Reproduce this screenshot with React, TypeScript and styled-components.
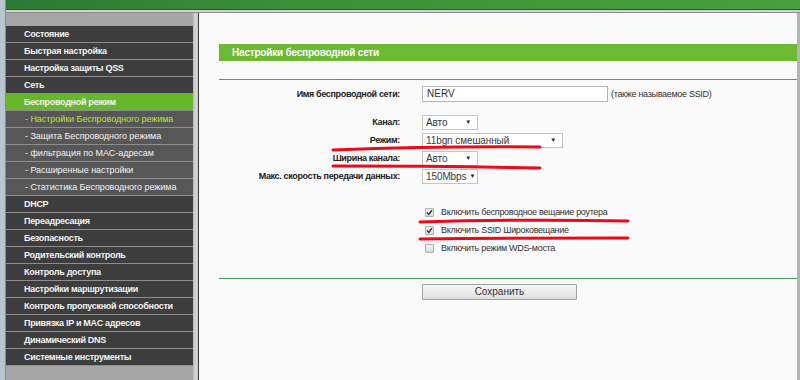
import React from "react";
import styled, { createGlobalStyle } from "styled-components";

const Global = createGlobalStyle`
  html, body { margin: 0; padding: 0; background: #fafafa; }
  body { font-family: "Liberation Sans", Arial, sans-serif; }
  * { box-sizing: border-box; }
`;

const Page = styled.div`
  position: relative;
  width: 800px;
  height: 380px;
  overflow: hidden;
  display: flex;
  background: #fafafa;
`;

const EdgeStrip = styled.div`
  width: 6px;
  flex: none;
  background: #b9c6cf;
  border-right: 1px solid #7f8a92;
`;

const Main = styled.div`
  flex: 1;
  display: flex;
  flex-direction: column;
`;

const TopBar = styled.div`
  height: 10px;
  flex: none;
  background: linear-gradient(90deg, #2a7a34 0%, #3c9238 40%, #46a03c 100%);
  border-bottom: 1px solid #1e5e28;
`;

const TopBand = styled.div`
  height: 3px;
  flex: none;
  background: #d2d2d2;
  border-bottom: 1px solid #8c8c8c;
`;

const Body = styled.div`
  flex: 1;
  display: flex;
  min-height: 0;
`;

const Sidebar = styled.nav`
  width: 187px;
  flex: none;
  background: #a6a6a6;
  padding-top: 13px;
  display: flex;
  flex-direction: column;
`;

const Rail = styled.div`
  width: 6px;
  flex: none;
  background: linear-gradient(90deg, #bdbdbd 0%, #d6d6d6 60%, #c4c4c4 100%);
  border-right: 1px solid #3a3a3a;
`;

type Kind = "main" | "sub" | "active" | "subactive";
const isSub = (k: Kind) => k === "sub" || k === "subactive";

const MenuItem = styled.div<{ $kind: Kind }>`
  height: 17px;
  line-height: 17px;
  border-bottom: 1px solid #8e8e8e;
  padding-left: ${(p) => (isSub(p.$kind) ? 19 : 18)}px;
  font-size: 9px;
  letter-spacing: ${(p) => (isSub(p.$kind) ? "-0.05px" : "-0.3px")};
  font-weight: ${(p) => (isSub(p.$kind) ? 400 : 700)};
  white-space: nowrap;
  background: ${(p) =>
    p.$kind === "active" ? "#66b82a" : p.$kind === "main" ? "#3d3d3d" : "#575757"};
  color: ${(p) => (p.$kind === "subactive" ? "#b8e62a" : "#f2f2f2")};
`;

const Content = styled.main`
  flex: 1;
  display: flex;
  flex-direction: column;
  padding: 31px 0 0 20px;
  border-right: 3px solid #b4b4b4;
`;

const Header = styled.div`
  height: 17px;
  background: #6cba32;
  color: #ffffff;
  font-size: 10px;
  font-weight: 700;
  letter-spacing: -0.2px;
  line-height: 17px;
  padding-left: 13px;
`;

const Divider = styled.div<{ $top: number; $bottom: number }>`
  height: 1px;
  background: #4e9a66;
  margin-top: ${(p) => p.$top}px;
  margin-bottom: ${(p) => p.$bottom}px;
`;

const Row = styled.div<{ $h?: number; $mt?: number }>`
  display: flex;
  align-items: center;
  height: ${(p) => p.$h ?? 18}px;
  margin-top: ${(p) => p.$mt ?? 0}px;
`;

const Label = styled.div`
  width: 181px;
  text-align: right;
  font-size: 9px;
  font-weight: 700;
  letter-spacing: -0.35px;
  color: #222;
  margin-right: 22px;
  white-space: nowrap;
`;

const TextInput = styled.div`
  width: 186px;
  height: 16px;
  border: 1px solid #b5b5b5;
  background: #fff;
  font-size: 10px;
  color: #333;
  line-height: 14px;
  padding-left: 4px;
`;

const Hint = styled.span`
  font-size: 9px;
  letter-spacing: -0.3px;
  color: #333;
  margin-left: 3px;
`;

const Select = styled.div<{ $w: number }>`
  width: ${(p) => p.$w}px;
  height: 15px;
  border: 1px solid #c4c4c4;
  background: #fff;
  display: flex;
  align-items: center;
  justify-content: space-between;
  gap: 3px;
  font-size: 10px;
  letter-spacing: -0.1px;
  color: #3a3a3a;
  padding: 0 6px 0 3px;
  white-space: nowrap;
`;

const Arrow = styled.span`
  font-size: 6px;
  color: #222;
`;

const CheckRow = styled.div`
  display: flex;
  align-items: center;
  height: 18px;
  padding-left: 206px;
  font-size: 9px;
  letter-spacing: -0.3px;
  color: #333;
`;

const Box = styled.span`
  width: 9px;
  height: 9px;
  border: 1px solid #b0b0b0;
  background: linear-gradient(#f2f2f2, #dadada);
  border-radius: 1px;
  margin-right: 7px;
  display: flex;
  align-items: center;
  justify-content: center;
`;

const Button = styled.div`
  margin-left: 203px;
  width: 155px;
  height: 16px;
  border: 1px solid #a0a0a0;
  border-radius: 1px;
  background: linear-gradient(#f6f6f6, #e0e0e0);
  font-size: 10px;
  color: #333;
  text-align: center;
  line-height: 14px;
`;

const Marks = styled.svg`
  position: absolute;
  left: 0;
  top: 0;
  pointer-events: none;
`;

const menu: { t: string; k: Kind }[] = [
  { t: "Состояние", k: "main" },
  { t: "Быстрая настройка", k: "main" },
  { t: "Настройка защиты QSS", k: "main" },
  { t: "Сеть", k: "main" },
  { t: "Беспроводной режим", k: "active" },
  { t: "- Настройки Беспроводного режима", k: "subactive" },
  { t: "- Защита Беспроводного режима", k: "sub" },
  { t: "- фильтрация по MAC-адресам", k: "sub" },
  { t: "- Расширенные настройки", k: "sub" },
  { t: "- Статистика Беспроводного режима", k: "sub" },
  { t: "DHCP", k: "main" },
  { t: "Переадресация", k: "main" },
  { t: "Безопасность", k: "main" },
  { t: "Родительский контроль", k: "main" },
  { t: "Контроль доступа", k: "main" },
  { t: "Настройки маршрутизации", k: "main" },
  { t: "Контроль пропускной способности", k: "main" },
  { t: "Привязка IP и MAC адресов", k: "main" },
  { t: "Динамический DNS", k: "main" },
  { t: "Системные инструменты", k: "main" },
];

const Check = ({ on }: { on: boolean }) => (
  <Box>
    {on && (
      <svg width="7" height="7" viewBox="0 0 7 7">
        <path d="M1 3.6 L2.8 5.4 L6 1.2" stroke="#333" strokeWidth="1.4" fill="none" />
      </svg>
    )}
  </Box>
);

export default function App() {
  return (
    <>
      <Global />
      <Page>
        <EdgeStrip />
        <Main>
          <TopBar />
          <TopBand />
          <Body>
            <Sidebar>
              {menu.map((m) => (
                <MenuItem key={m.t} $kind={m.k}>
                  {m.t}
                </MenuItem>
              ))}
            </Sidebar>
            <Rail />
            <Content>
              <Header>Настройки беспроводной сети</Header>
              <Divider $top={18} $bottom={5} />
              <Row>
                <Label>Имя беспроводной сети:</Label>
                <TextInput>NERV</TextInput>
                <Hint>(также называемое SSID)</Hint>
              </Row>
              <Row $mt={10}>
                <Label>Канал:</Label>
                <Select $w={56}>
                  Авто<Arrow>▼</Arrow>
                </Select>
              </Row>
              <Row>
                <Label>Режим:</Label>
                <Select $w={141}>
                  11bgn смешанный<Arrow>▼</Arrow>
                </Select>
              </Row>
              <Row>
                <Label>Ширина канала:</Label>
                <Select $w={56}>
                  Авто<Arrow>▼</Arrow>
                </Select>
              </Row>
              <Row>
                <Label>Макс. скорость передачи данных:</Label>
                <Select $w={56}>
                  150Mbps<Arrow>▼</Arrow>
                </Select>
              </Row>
              <Row $mt={18} $h={0} />
              <CheckRow>
                <Check on />
                Включить беспроводное вещание роутера
              </CheckRow>
              <CheckRow>
                <Check on />
                Включить SSID Широковещание
              </CheckRow>
              <CheckRow>
                <Check on={false} />
                Включить режим WDS-моста
              </CheckRow>
              <Divider $top={21} $bottom={5} />
              <Row $h={16}>
                <Button>Сохранить</Button>
              </Row>
            </Content>
          </Body>
        </Main>
        <Marks width="800" height="380">
          <g stroke="#ec0a1a" strokeWidth="3" fill="none" strokeLinecap="round">
            <path d="M333 150 Q440 146 540 147" />
            <path d="M333 166 Q440 166 540 168" />
            <path d="M420 222 Q520 219 628 221" />
            <path d="M420 239 Q520 238 628 238" />
          </g>
        </Marks>
      </Page>
    </>
  );
}
